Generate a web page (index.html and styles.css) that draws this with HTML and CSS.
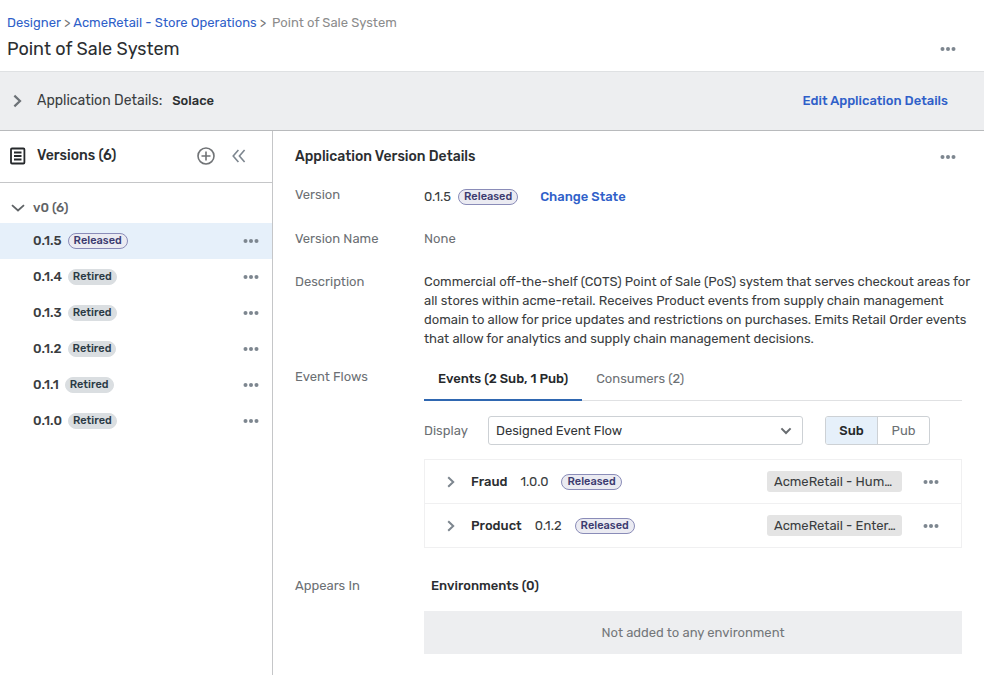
FILE: index.html
```html
<!DOCTYPE html>
<html lang="en">
<head>
<meta charset="utf-8">
<meta name="viewport" content="width=device-width, initial-scale=1">
<title>Point of Sale System</title>
<link rel="stylesheet" href="styles.css">
</head>
<body>
<svg class="defs" aria-hidden="true">
  <symbol id="dots" viewBox="0 0 16 6"><circle cx="2.5" cy="3" r="2"/><circle cx="8" cy="3" r="2"/><circle cx="13.5" cy="3" r="2"/></symbol>
  <symbol id="chevron" viewBox="0 0 8 12"><path d="M1.2 1.2 6.2 6 1.2 10.8"/></symbol>
</svg>

<header class="page-header">
  <nav class="breadcrumb" aria-label="Breadcrumb">
    <a href="#">Designer</a><span class="sep">&gt;</span><a href="#">AcmeRetail - Store Operations</a><span class="sep">&gt;</span><span class="current">Point of Sale System</span>
  </nav>
  <div class="title-row">
    <h1>Point of Sale System</h1>
    <button class="icon-button" aria-label="Application actions"><svg class="dots"><use href="#dots"/></svg></button>
  </div>
</header>

<section class="app-bar">
  <button class="icon-button" aria-label="Expand application details"><svg class="chevron large"><use href="#chevron"/></svg></button>
  <span class="app-label">Application Details:</span>
  <strong class="app-name">Solace</strong>
  <a class="action push" href="#">Edit Application Details</a>
</section>

<div class="workspace">
  <aside class="sidebar">
    <div class="sidebar-head">
      <svg class="doc-icon" viewBox="0 0 16 18" aria-hidden="true"><rect x="1" y="1.5" width="13.4" height="15" rx="1"/><path d="M4 5.5h7.5M4 9h7.5M4 12.5h7.5"/></svg>
      <h2>Versions (6)</h2>
      <button class="icon-button push" aria-label="Add version"><svg class="add-icon" viewBox="0 0 18 18"><circle cx="9" cy="9" r="8"/><path d="M9 4.5v9M4.5 9h9"/></svg></button>
      <button class="icon-button collapse" aria-label="Collapse panel"><svg class="collapse-icon" viewBox="0 0 14 14"><path d="M6.4 1 1.2 7l5.2 6M12.6 1 7.4 7l5.2 6"/></svg></button>
    </div>
    <button class="group"><svg class="group-icon" viewBox="0 0 14 8" aria-hidden="true"><path d="M1 1.2 7 6.5 13 1.2"/></svg>v0 (6)</button>
    <ul class="versions">
      <li class="selected"><span class="number">0.1.5</span><span class="badge released">Released</span><button class="icon-button push" aria-label="Actions for 0.1.5"><svg class="dots"><use href="#dots"/></svg></button></li>
      <li><span class="number">0.1.4</span><span class="badge">Retired</span><button class="icon-button push" aria-label="Actions for 0.1.4"><svg class="dots"><use href="#dots"/></svg></button></li>
      <li><span class="number">0.1.3</span><span class="badge">Retired</span><button class="icon-button push" aria-label="Actions for 0.1.3"><svg class="dots"><use href="#dots"/></svg></button></li>
      <li><span class="number">0.1.2</span><span class="badge">Retired</span><button class="icon-button push" aria-label="Actions for 0.1.2"><svg class="dots"><use href="#dots"/></svg></button></li>
      <li><span class="number">0.1.1</span><span class="badge">Retired</span><button class="icon-button push" aria-label="Actions for 0.1.1"><svg class="dots"><use href="#dots"/></svg></button></li>
      <li><span class="number">0.1.0</span><span class="badge">Retired</span><button class="icon-button push" aria-label="Actions for 0.1.0"><svg class="dots"><use href="#dots"/></svg></button></li>
    </ul>
  </aside>

  <main class="details">
    <div class="details-head">
      <h2>Application Version Details</h2>
      <button class="icon-button" aria-label="Version actions"><svg class="dots"><use href="#dots"/></svg></button>
    </div>
    <dl class="fields">
      <dt>Version</dt>
      <dd class="version-value"><span>0.1.5</span><span class="badge released">Released</span><a class="action" href="#">Change State</a></dd>
      <dt>Version Name</dt>
      <dd class="muted">None</dd>
      <dt>Description</dt>
      <dd class="description">Commercial off-the-shelf (COTS) Point of Sale (PoS) system that serves checkout areas for all stores within acme-retail. Receives Product events from supply chain management domain to allow for price updates and restrictions on purchases. Emits Retail Order events that allow for analytics and supply chain management decisions.</dd>
      <dt>Event Flows</dt>
      <dd class="flows">
        <div class="tabs" role="tablist">
          <button class="tab active" role="tab" aria-selected="true">Events (2 Sub, 1 Pub)</button>
          <button class="tab" role="tab" aria-selected="false">Consumers (2)</button>
        </div>
        <div class="filters">
          <label for="display">Display</label>
          <div class="select">
            <select id="display"><option>Designed Event Flow</option></select>
            <svg class="select-icon" viewBox="0 0 12 8" aria-hidden="true"><path d="M1.4 1.4 6 6l4.600-4.600"/></svg>
          </div>
          <div class="toggle">
            <button class="on" aria-pressed="true">Sub</button>
            <button aria-pressed="false">Pub</button>
          </div>
        </div>
        <ul class="events">
          <li>
            <button class="icon-button" aria-label="Expand Fraud"><svg class="chevron"><use href="#chevron"/></svg></button>
            <strong>Fraud</strong><span>1.0.0</span><span class="badge released">Released</span>
            <span class="domain">AcmeRetail - Hum…</span>
            <button class="icon-button" aria-label="Actions for Fraud"><svg class="dots"><use href="#dots"/></svg></button>
          </li>
          <li>
            <button class="icon-button" aria-label="Expand Product"><svg class="chevron"><use href="#chevron"/></svg></button>
            <strong>Product</strong><span>0.1.2</span><span class="badge released">Released</span>
            <span class="domain">AcmeRetail - Enter…</span>
            <button class="icon-button" aria-label="Actions for Product"><svg class="dots"><use href="#dots"/></svg></button>
          </li>
        </ul>
      </dd>
      <dt>Appears In</dt>
      <dd>
        <h3>Environments (0)</h3>
        <p class="empty">Not added to any environment</p>
      </dd>
    </dl>
  </main>
</div>
</body>
</html>
```

FILE: styles.css
```css
* { box-sizing: border-box; }

body {
  display: flex;
  flex-direction: column;
  min-height: 100vh;
  margin: 0;
  background: #fff;
  color: #3a3d40;
  font: 13px/20px Rubik, Roboto, "Liberation Sans", sans-serif;
}

h1, h2, h3, p, ul, dl, dd { margin: 0; padding: 0; }
ul { list-style: none; }
h2, h3, strong { font-weight: 500; color: #2b2e31; }
a { color: #2f5fc9; text-decoration: none; }
svg { display: block; fill: none; stroke: currentColor; }
button { margin: 0; padding: 0; border: 0; background: none; color: inherit; font: inherit; cursor: pointer; }

.defs { position: absolute; width: 0; height: 0; }
.push { margin-left: auto; }
.action { font-weight: 500; }
.icon-button { flex: none; color: #7d868f; }
.dots { width: 16px; height: 6px; fill: currentColor; stroke: none; }
.chevron { width: 8px; height: 12px; stroke-width: 2; }
.chevron.large { width: 9px; height: 14px; color: #6d7277; }

.page-header { padding: 13px 28px 10px 7px; border-bottom: 1px solid #dfe1e3; }
.breadcrumb { display: flex; gap: 3px; }
.breadcrumb .sep { color: #777; }
.breadcrumb .current { margin-left: 3px; color: #8c8c8c; }
.title-row { display: flex; align-items: center; justify-content: space-between; margin-top: 4px; }
h1 { font-size: 18px; line-height: 24px; font-weight: 400; color: #2b2e31; }

.app-bar { display: flex; align-items: center; height: 59px; padding: 0 36px 0 13px; border-bottom: 1px solid #b8babc; background: #edeef0; }
.app-label { margin: 0 10px 0 15px; font-size: 14px; }

.workspace { display: flex; flex: 1; }

.sidebar { flex: none; width: 273px; border-right: 1px solid #c5c6c8; }
.sidebar-head { display: flex; align-items: center; height: 52px; padding: 0 26px 1px 10px; border-bottom: 1px solid #c5c6c8; }
.sidebar-head h2 { margin-left: 11px; }
h2 { font-size: 14px; }
.doc-icon { width: 16px; height: 18px; color: #25282b; stroke-width: 1.800; }
.add-icon { width: 18px; height: 18px; color: #707376; stroke-width: 1.600; }
.collapse { margin-left: 17px; }
.collapse-icon { width: 14px; height: 14px; stroke-width: 1.600; }
.group { display: flex; align-items: center; gap: 8px; height: 40px; padding: 9px 11px 0; color: #5f6366; font-weight: 500; }
.group-icon { width: 14px; height: 8px; stroke-width: 1.800; }
.versions li { display: flex; align-items: center; height: 36px; padding: 0 13px 0 33px; }
.versions .selected { background: #e6f0fa; }
.number { margin-right: 6px; font-weight: 500; }

.badge { padding: 0 4px; border: 1px solid #dadee1; border-radius: 8px; background: #dadee1; color: #2b3a45; font-size: 11px; line-height: 14px; font-weight: 500; }
.badge.released { padding: 0 5px; border-color: #8a8cb8; background: #ebebf2; color: #3c3b70; }

.details { flex: 1; min-width: 0; padding: 16px 22px 20px; }
.details-head { display: flex; align-items: center; justify-content: space-between; padding-right: 6px; }
.fields { display: grid; grid-template-columns: 129px 1fr; margin-top: 18px; }
.fields dt { color: #6c7074; }
.fields dd { min-width: 0; }
.version-value { display: flex; align-items: center; height: 24px; margin-bottom: 20px; }
.version-value .badge { margin: 0 22px 0 7px; }
.fields .muted { margin-bottom: 23px; color: #6c7074; }
.fields .description { margin: 0 -12px 19px 0; line-height: 19px; }

.fields .flows { margin-bottom: 28px; }
.tabs { display: flex; border-bottom: 1px solid #e0e1e3; }
.tab { height: 34px; margin-bottom: -1px; padding: 0 14px 8px; border-bottom: 2px solid transparent; color: #6c7074; }
.tab.active { border-color: #2f67b1; color: #25282b; font-weight: 500; }
.filters { display: flex; align-items: center; margin: 15px 32px 14px 0; color: #6c7074; }
.filters label { width: 64px; }
.select { display: grid; flex: 1; align-items: center; color: #333639; }
.select > * { grid-area: 1 / 1; }
.select select { width: 100%; height: 29px; padding: 0 7px; border: 1px solid #cdd1d5; border-radius: 3px; background: #fff; color: inherit; font: inherit; appearance: none; }
.select-icon { width: 12px; height: 8px; margin-right: 11px; justify-self: end; color: #686c70; stroke-width: 2; pointer-events: none; }
.toggle { display: flex; margin-left: 22px; height: 29px; border: 1px solid #cdd1d5; border-radius: 3px; overflow: hidden; }
.toggle button { width: 51px; }
.toggle button + button { width: 52px; border-left: 1px solid #cdd1d5; }
.toggle .on { background: #e6f0fa; color: #25282b; font-weight: 500; }

.events { border: 1px solid #f0f0f1; }
.events li { display: flex; align-items: center; gap: 13px; height: 43px; padding: 0 22px; }
.events li + li { height: 44px; border-top: 1px solid #f0f0f1; }
.events strong { margin-left: 3px; }
.domain { width: 135px; margin: 0 8px 0 auto; padding: 0 7px; border-radius: 3px; background: #e4e4e4; line-height: 21px; white-space: nowrap; }

h3 { padding-left: 7px; font-size: 13px; }
.empty { margin-top: 15px; padding: 11px; background: #edeef0; color: #74777a; line-height: 21px; text-align: center; }
```
